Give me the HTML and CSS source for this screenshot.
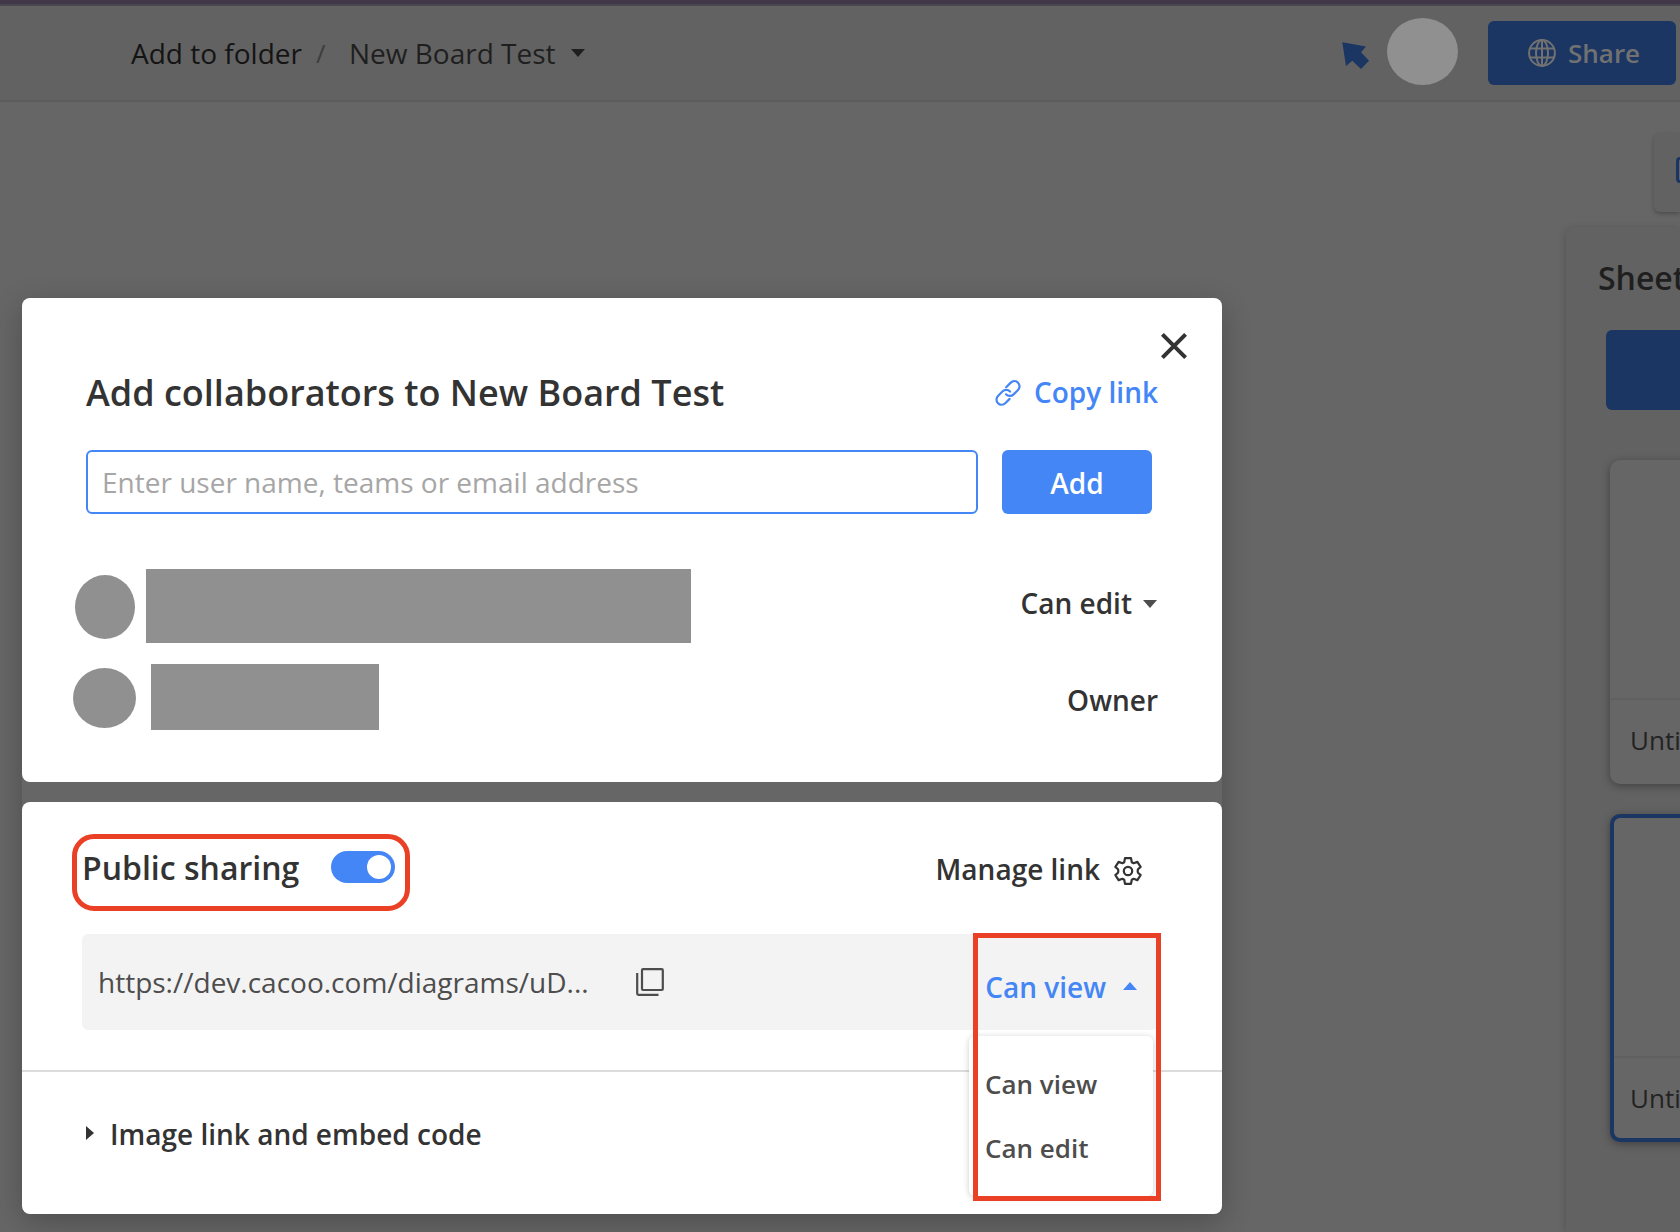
FILE: index.html
```html
<!DOCTYPE html>
<html lang="en">
<head>
<meta charset="utf-8">
<title>New Board Test</title>
<link rel="stylesheet" href="styles.css">
</head>
<body>
<div class="app">
  <header class="topbar">
    <nav class="crumbs">
      <span class="crumb-folder">Add to folder</span>
      <span class="crumb-sep">/</span>
      <span class="crumb-board">New Board Test</span>
      <svg class="caret" width="14" height="8" viewBox="0 0 14 8"><path d="M0 0h14L7 8z" fill="#1f1f1f"/></svg>
    </nav>
    <div class="actions">
      <svg class="pointer" width="28" height="28" viewBox="0 0 28 28"><path d="M.3.3 24 4.500 19 10.300 27 18.700 19 27 10.300 18.700 4 24z" fill="#1b3663"/></svg>
      <span class="avatar-top"></span>
      <button class="share">
        <svg width="28" height="28" viewBox="0 0 28 28" fill="none" stroke="#717171" stroke-width="2"><circle cx="14" cy="14" r="12.900"/><ellipse cx="14" cy="14" rx="6" ry="12.900"/><path d="M14 1v26M2 9.600h24M2 18.400h24"/></svg>
        <span>Share</span>
      </button>
    </div>
  </header>
  <main class="canvas">
    <div class="tool"><span class="tool-icon"></span></div>
    <aside class="sheets">
      <h2 class="sheets-title">Sheets</h2>
      <div class="sheets-add"></div>
      <div class="sheet"><div class="sheet-view"></div><div class="sheet-name">Untitled</div></div>
      <div class="sheet sheet-active"><div class="sheet-view"></div><div class="sheet-name">Untitled</div></div>
    </aside>
  </main>

  <div class="dialog">
    <section class="card people">
      <svg class="close" width="26" height="26" viewBox="0 0 26 26"><path d="M1.400 1.400l23.200 23.200M24.600 1.400 1.400 24.600" stroke="#333" stroke-width="4"/></svg>
      <div class="title-row">
        <h1 class="title">Add collaborators to New Board Test</h1>
        <a class="copy-link">
          <svg width="26" height="26" viewBox="0 0 26 26" fill="none" stroke="#4486f6" stroke-width="2.200" stroke-linecap="round"><path d="M11.200 7.200 15.500 2.900C17.700.7 20.900.6 23 2.700s2 5.300-.2 7.500L18.600 14.400C16.400 16.500 13 16.500 11 14.300"/><path d="M14.600 18.900 10.500 23C8.300 25.200 5.100 25.300 3 23.200S1 17.900 3.200 15.700L7.400 11.500C9.600 9.400 13 9.400 15 11.600"/></svg>
          <span>Copy link</span>
        </a>
      </div>
      <div class="invite">
        <div class="field">Enter user name, teams or email address</div>
        <button class="add"><span>Add</span></button>
      </div>
      <div class="user user-one">
        <span class="avatar"></span><span class="name"></span>
        <span class="role">Can edit</span>
        <svg class="caret" width="14" height="8" viewBox="0 0 14 8"><path d="M0 0h14L7 8z" fill="#4d4d4d"/></svg>
      </div>
      <div class="user user-two">
        <span class="avatar"></span><span class="name"></span>
        <span class="role role-owner">Owner</span>
      </div>
    </section>

    <section class="card public">
      <div class="public-row">
        <span class="public-label">Public sharing</span>
        <span class="toggle"><span class="knob"></span></span>
        <span class="manage">Manage link</span>
        <svg class="gear" width="28" height="28" viewBox="0 0 28 28" fill="none" stroke="#333" stroke-width="2.200" stroke-linejoin="round"><path d="M11 1.200h6l.8 4 1.800 1 3.800-1.300 3.200 5-2.600 2.400q-.6 1.700 0 3.400l2.600 2.400-3.200 5-3.800-1.300-1.800 1-.8 4h-6l-.8-4-1.800-1-3.800 1.300-3.200-5 2.600-2.400q.6-1.700 0-3.400L1.400 9.900l3.200-5 3.800 1.300 1.800-1z"/><circle cx="14" cy="14" r="4.200"/></svg>
      </div>
      <div class="url-bar">
        <span class="url">https://dev.cacoo.com/diagrams/uD...</span>
        <svg class="copy" width="28" height="28" viewBox="0 0 28 28" fill="none" stroke="#4d4d4d" stroke-width="2.200"><rect x="6" y="1.200" width="20.800" height="20.800" rx="1"/><path d="M1.200 5v20.600q0 1.200 1.200 1.200H22.500"/></svg>
        <span class="permission">Can view</span>
        <svg class="caret-up" width="14" height="8" viewBox="0 0 14 8"><path d="M0 8h14L7 0z" fill="#4486f6"/></svg>
      </div>
      <div class="embed">
        <svg width="8" height="14" viewBox="0 0 8 14"><path d="M0 0v14l8-7z" fill="#333"/></svg>
        <span>Image link and embed code</span>
      </div>
      <div class="menu"><span class="option">Can view</span><span class="option">Can edit</span></div>
      <div class="mark mark-sharing"></div>
      <div class="mark mark-permission"></div>
    </section>
  </div>
</div>
</body>
</html>
```
FILE: styles.css
```css
* { box-sizing: border-box; }
body { margin: 0; font-family: "Open Sans", "Noto Sans", sans-serif; color: #333; font-size: 28px; line-height: 40px; }
h1, h2 { margin: 0; font-weight: 600; }
button { border: 0; padding: 0; font: inherit; display: flex; align-items: center; }
svg { display: block; flex: none; }
span { white-space: nowrap; }

.app { position: relative; width: 1680px; height: 1232px; overflow: hidden; background: #666; display: flex; flex-direction: column; }

.topbar { flex: none; height: 102px; background: #626262; border-top: 4px solid #403849; border-bottom: 2px solid #5c5c5c; box-shadow: inset 0 2px #4b4751; display: flex; justify-content: space-between; }
.crumbs { display: flex; align-items: center; padding: 0 0 0 131px; height: 98px; color: #1f1f1f; }
.crumb-folder { color: #141414; width: 185px; }
.crumb-sep { font-size: 26px; color: #3d3d3d; width: 33px; }
.crumb-board { width: 222px; }
.actions { display: flex; padding-right: 4px; }
.pointer { margin: 38px 17px 0 0; }
.avatar-top { width: 71px; height: 67px; margin: 14px 30px 0 0; border-radius: 50%; background: #909090; }
.share { width: 188px; height: 64px; margin-top: 17px; padding-left: 40px; gap: 12px; border-radius: 6px; background: #1b3663; color: #717171; font-size: 26px; font-weight: 600; }

.canvas { flex: 1; display: flex; flex-direction: column; align-items: flex-end; padding-top: 31px; }
.tool { flex: none; width: 26px; height: 79px; background: #626262; border-radius: 6px 0 0 6px; box-shadow: 0 2px 4px rgba(0,0,0,.25); padding: 24px 0 0 22px; overflow: hidden; }
.tool-icon { display: block; width: 26px; height: 26px; border: 3px solid #1b3663; border-radius: 4px; }
.sheets { width: 114px; flex: 1; margin-top: 15px; background: #626262; border-radius: 8px 0 0 0; box-shadow: 0 2px 8px rgba(0,0,0,.2); overflow: hidden; padding-top: 31px; }
.sheets-title { margin-left: 32px; font-size: 32px; color: #1f1f1f; }
.sheets-add { margin: 32px 0 50px 40px; width: 200px; height: 80px; border-radius: 6px; background: #1b3663; }
.sheet { margin: 0 0 30px 44px; width: 220px; height: 324px; border-radius: 10px; background: #666; box-shadow: 0 2px 8px rgba(0,0,0,.35); }
.sheet-view { height: 240px; border-bottom: 2px solid #606060; }
.sheet-name { padding: 20px 0 0 20px; font-size: 26px; color: #232323; }
.sheet-active { height: 328px; border: 4px solid #1b3663; }
.sheet-active .sheet-name { padding-left: 16px; }

.dialog { position: absolute; left: 22px; top: 298px; width: 1200px; display: flex; flex-direction: column; gap: 20px; border-radius: 8px; box-shadow: 0 8px 30px rgba(0,0,0,.24); background: #666; font-weight: 600; }
.card { position: relative; background: #fff; border-radius: 8px; }
.people { height: 484px; display: flex; flex-direction: column; }
.close { margin: 34.500px 35.500px 14.500px auto; }
.title-row { display: flex; justify-content: space-between; padding: 0 64px; height: 77px; }
.title { font-size: 36px; }
.copy-link { display: flex; color: #4486f6; gap: 13px; margin-top: -1px; }
.copy-link svg { margin-top: 8px; }
.invite { display: flex; gap: 24px; padding-left: 64px; }
.field { width: 892px; height: 64px; border: 2px solid #4486f6; border-radius: 6px; padding: 10px 14px; font-weight: 400; color: #a6a6a6; }
.add { width: 150px; height: 64px; padding-top: 2px; border-radius: 6px; background: #4486f6; color: #fff; justify-content: center; }
.user { display: flex; align-items: flex-start; padding-right: 64px; }
.avatar, .name { background: #909090; }
.avatar { border-radius: 50%; }
.user-one { margin: 55px 0 0 53px; height: 95px; }
.user-one .avatar { width: 60px; height: 64px; margin: 6px 11.400px 0 0; }
.user-one .name { width: 545px; height: 74px; margin-top: .4px; }
.role { margin: 14px 11px 0 auto; }
.user-one .caret { margin: 31px 1px 0 0; }
.user-two { margin-left: 51px; }
.user-two .avatar { width: 63px; height: 60px; margin: 4px 15.400px 0 0; }
.user-two .name { width: 228px; height: 66px; margin-top: .4px; }
.role-owner { margin: 16px 0 0 auto; }

.public { height: 412px; }
.public-row { display: flex; align-items: flex-start; padding: 45px 80px 0 60px; height: 132px; }
.public-label { font-size: 32px; width: 249px; margin-top: 1px; }
.toggle { width: 64px; height: 32px; margin-top: 4px; border-radius: 16px; background: #4486f6; padding: 4px 4px 4px 36px; }
.knob { display: block; width: 24px; height: 24px; border-radius: 50%; background: #fff; }
.manage { margin: 2px 14px 0 auto; }
.gear { margin-top: 10px; }
.url-bar { display: flex; margin-left: 60px; width: 1076px; height: 96px; background: #f3f3f3; border-radius: 6px; padding-left: 16px; align-items: flex-start; }
.url { width: 538px; margin-top: 28px; font-weight: 400; color: #4d4d4d; }
.copy { margin-top: 34px; }
.permission { margin: 33px 17px 0 auto; color: #4486f6; }
.caret-up { margin: 48px 21px 0 0; }
.embed { display: flex; align-items: center; gap: 16px; margin-top: 40px; border-top: 2px solid #dcdcdc; padding-left: 64px; height: 124px; }
.embed span { padding-top: 2px; }
.menu { position: absolute; left: 947px; top: 234px; width: 184px; height: 160px; padding: 28px 16px; background: #fff; border-radius: 6px; box-shadow: 0 1px 6px rgba(0,0,0,.2); display: flex; flex-direction: column; gap: 24px; font-size: 26px; color: #4d4d4d; }
.mark { position: absolute; border: 5px solid #ea4025; }
.mark-sharing { left: 50.400px; top: 32px; width: 338px; height: 77px; border-radius: 22px; }
.mark-permission { left: 951.400px; top: 131.400px; width: 188px; height: 268px; }
```
